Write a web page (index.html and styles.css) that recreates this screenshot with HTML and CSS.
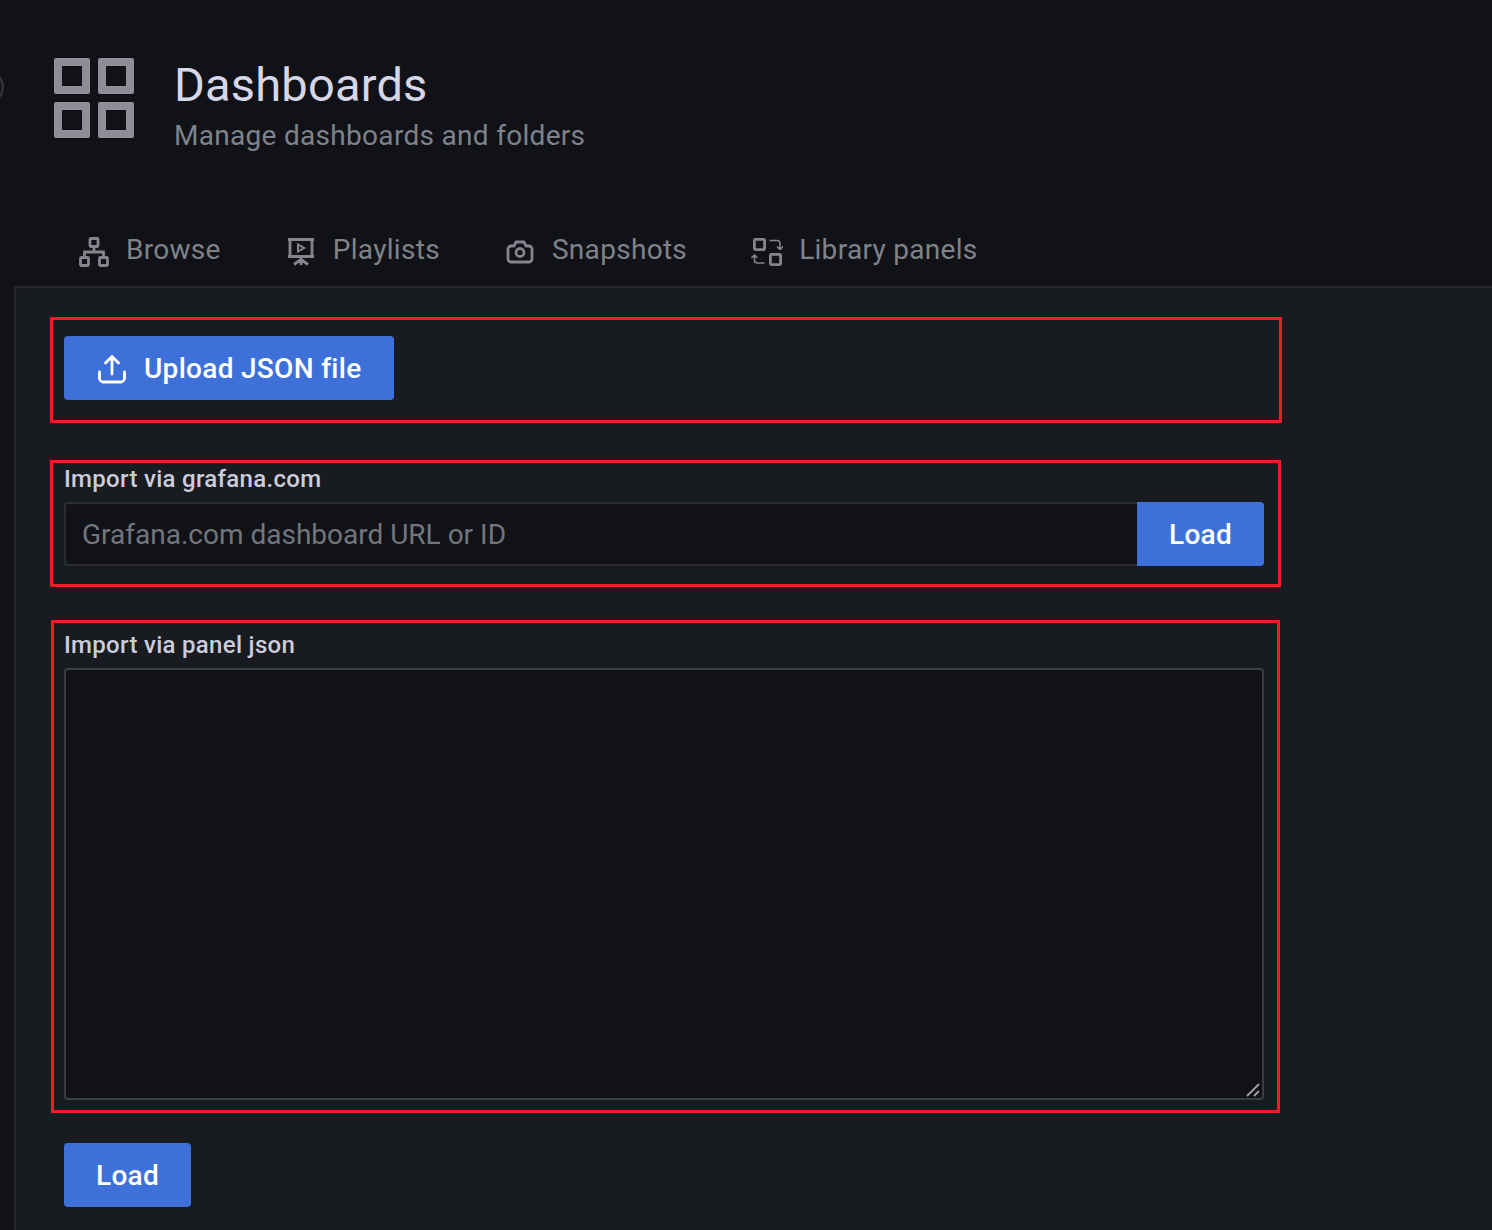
FILE: index.html
```html
<!DOCTYPE html>
<html lang="en">
<head>
<meta charset="utf-8">
<title>Dashboards</title>
<link rel="stylesheet" href="styles.css">
</head>
<body>
<div class="edge-toggle"></div>
<header class="page-header">
  <svg class="header-icon" viewBox="0 0 80 80" aria-hidden="true">
    <path fill-rule="evenodd" d="M2 0h32a2 2 0 0 1 2 2v32a2 2 0 0 1-2 2H2a2 2 0 0 1-2-2V2a2 2 0 0 1 2-2zM8 8v20h20V8zM46 0h32a2 2 0 0 1 2 2v32a2 2 0 0 1-2 2H46a2 2 0 0 1-2-2V2a2 2 0 0 1 2-2zM52 8v20h20V8zM2 44h32a2 2 0 0 1 2 2v32a2 2 0 0 1-2 2H2a2 2 0 0 1-2-2V46a2 2 0 0 1 2-2zM8 52v20h20V52zM46 44h32a2 2 0 0 1 2 2v32a2 2 0 0 1-2 2H46a2 2 0 0 1-2-2V46a2 2 0 0 1 2-2zM52 52v20h20V52z"/>
  </svg>
  <div class="header-text">
    <h1 class="title">Dashboards</h1>
    <p class="subtitle">Manage dashboards and folders</p>
  </div>
</header>
<nav class="tabs">
  <a class="tab tab-browse">
    <svg class="tab-icon" viewBox="0 0 32 32" aria-hidden="true"><g fill="none" stroke="currentColor" stroke-width="2.8"><rect x="12" y="2.5" width="8" height="8" rx="1"/><rect x="2.500" y="21.500" width="8" height="8" rx="1"/><rect x="21.500" y="21.500" width="8" height="8" rx="1"/><path d="M16 10.500V16M6.500 21.500V16H25.500V21.500"/></g></svg>
    <span>Browse</span>
  </a>
  <a class="tab tab-playlists">
    <svg class="tab-icon" viewBox="0 0 32 32" aria-hidden="true"><g fill="none" stroke="currentColor" stroke-width="2.8"><path d="M3 3.500H29M5 3.500V20.500H27V3.500M3 20.500H29M16 20.500V29M16 23.500L9 28.500M16 23.500L23 28.500"/><path d="M13 8.500V15.500L19 12Z" stroke-width="2"/></g></svg>
    <span>Playlists</span>
  </a>
  <a class="tab tab-snapshots">
    <svg class="tab-icon" viewBox="0 0 32 32" aria-hidden="true"><g fill="none" stroke="currentColor" stroke-width="2.8" stroke-linejoin="round"><path d="M7 10H10L12 6H20L22 10H25A3 3 0 0 1 28 13V23A3 3 0 0 1 25 26H7A3 3 0 0 1 4 23V13A3 3 0 0 1 7 10Z"/><circle cx="16" cy="16.500" r="4"/></g></svg>
    <span>Snapshots</span>
  </a>
  <a class="tab tab-library">
    <svg class="tab-icon" viewBox="0 0 32 32" aria-hidden="true"><g fill="none" stroke="currentColor" stroke-width="2.8" stroke-linejoin="round"><rect x="3.400" y="3.400" width="10.200" height="10.200" rx="1"/><rect x="19.400" y="18.400" width="10.200" height="10.200" rx="1"/><path d="M18.500 4.500H26A3 3 0 0 1 29 7.500V13M26 10.500L29 13.500L32 10.500" stroke-width="1.600"/><path d="M13.500 27H6.500A3 3 0 0 1 3.500 24V19.500M.5 22L3.500 19L6.500 22" stroke-width="1.600"/></g></svg>
    <span>Library panels</span>
  </a>
</nav>
<main class="content">
  <section class="mark mark-upload">
    <button class="btn btn-upload" type="button">
      <svg class="btn-icon" viewBox="0 0 32 32" aria-hidden="true"><path fill="none" stroke="currentColor" stroke-width="2.800" stroke-linecap="round" stroke-linejoin="round" d="M16 21V4M9.500 10L16 3.500L22.500 10M3.500 19V25A4 4 0 0 0 7.500 29H24.500A4 4 0 0 0 28.500 25V19"/></svg>
      <span>Upload JSON file</span>
    </button>
  </section>
  <section class="mark mark-url">
    <label class="field-label" for="gcom">Import via grafana.com</label>
    <div class="input-group">
      <input id="gcom" class="text-input" type="text" placeholder="Grafana.com dashboard URL or ID">
      <button class="btn btn-append" type="button">Load</button>
    </div>
  </section>
  <section class="mark mark-json">
    <label class="field-label" for="json">Import via panel json</label>
    <div class="textarea-wrap">
      <textarea id="json" class="json-input"></textarea>
      <svg class="resizer" viewBox="0 0 14 14" aria-hidden="true"><path fill="none" stroke="#a0a0a0" stroke-width="1.800" d="M1 13L13 1M8 13L13 8"/></svg>
    </div>
  </section>
  <button class="btn btn-load" type="button">Load</button>
</main>
</body>
</html>
```
FILE: styles.css
```css
* { box-sizing: border-box; }
html, body { margin: 0; height: 100%; }
body {
  position: relative;
  height: 1230px;
  overflow: hidden;
  background: #111217;
  color: #ccccdc;
  font-family: Roboto, "Liberation Sans", sans-serif;
  letter-spacing: 0.3px;
}
.edge-toggle {
  position: absolute;
  left: -30px;
  top: 70px;
  width: 34px;
  height: 34px;
  border-radius: 50%;
  background: #181b1f;
  border: 2px solid #34363b;
}
.page-header {
  display: flex;
  gap: 40px;
  padding: 58px 0 0 54px;
  height: 230px;
}
.header-icon { width: 80px; height: 80px; fill: #8e8e98; flex: none; }
.header-text { display: flex; flex-direction: column; }
.title {
  margin: 0;
  font-size: 47px;
  font-weight: 400;
  line-height: 54px;
  letter-spacing: 0.2px;
  color: #d5d7e8;
}
.subtitle {
  margin: 7px 0 0;
  font-size: 28px;
  line-height: 34px;
  color: #7e828a;
}
.tabs {
  display: flex;
  height: 56px;
  padding-left: 78px;
  gap: 65px;
}
.tab {
  display: flex;
  align-items: center;
  gap: 15px;
  height: 38px;
  font-size: 28px;
  color: #7f8389;
}
.tab-icon { width: 32px; height: 32px; flex: none; color: #85858f; margin-top: 6px; }
.tab-browse { gap: 16px; }
.tab-playlists, .tab-snapshots, .tab-library { gap: 16px; margin-left: -1px; }
.content {
  margin-left: 14px;
  height: 944px;
  padding: 29px 0 0 34px;
  background: #181b1f;
  border-top: 2px solid #26282d;
  border-left: 2px solid #26282d;
}
.mark { border: 3px solid #f01c28; }
.mark-upload {
  width: 1232px;
  height: 106px;
  padding: 16px 11px;
}
.mark-url {
  width: 1231px;
  height: 127px;
  margin-top: 37px;
  padding: 1px 14px 0 11px;
}
.mark-json {
  width: 1229px;
  height: 493px;
  margin: 33px 0 0 1px;
  padding: 7px 13px 0 10px;
}
.field-label {
  display: block;
  font-size: 24px;
  font-weight: 500;
  line-height: 30px;
  color: #ccccdc;
}
.btn {
  border: 0;
  border-radius: 4px;
  background: #3d71d9;
  color: #fff;
  font: 500 28px/32px Roboto, "Liberation Sans", sans-serif;
  letter-spacing: 0.3px;
  height: 64px;
  padding: 2px 32px 0;
}
.btn-upload {
  display: flex;
  align-items: center;
  gap: 16px;
  width: 330px;
}
.btn-icon { width: 32px; height: 32px; flex: none; }
.input-group { display: flex; margin-top: 8px; height: 64px; }
.text-input {
  flex: 1;
  min-width: 0;
  height: 64px;
  padding: 0 16px;
  background: #111217;
  border: 2px solid #2b2d32;
  border-right: 0;
  border-radius: 4px 0 0 4px;
  color: #ccccdc;
  font: 400 28px Roboto, "Liberation Sans", sans-serif;
  outline: none;
}
.text-input::placeholder { color: #72767c; opacity: 1; }
.btn-append { width: 127px; border-radius: 0 4px 4px 0; flex: none; }
.textarea-wrap { position: relative; margin-top: 8px; height: 432px; }
.json-input {
  display: block;
  width: 100%;
  height: 100%;
  resize: none;
  background: #111217;
  border: 2px solid #3a3c41;
  border-radius: 4px;
  outline: none;
}
.resizer {
  position: absolute;
  right: 4px;
  bottom: 3px;
  width: 14px;
  height: 14px;
}
.btn-load { display: block; margin: 30px 0 0 14px; width: 127px; }
```
